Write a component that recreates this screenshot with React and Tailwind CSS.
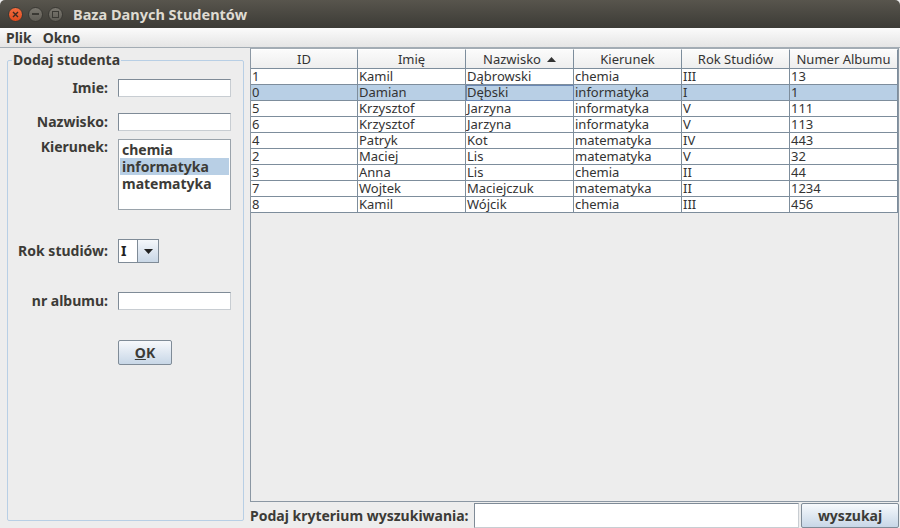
import React from "react";

const rows = [
  ["1", "Kamil", "Dąbrowski", "chemia", "III", "13"],
  ["0", "Damian", "Dębski", "informatyka", "I", "1"],
  ["5", "Krzysztof", "Jarzyna", "informatyka", "V", "111"],
  ["6", "Krzysztof", "Jarzyna", "informatyka", "V", "113"],
  ["4", "Patryk", "Kot", "matematyka", "IV", "443"],
  ["2", "Maciej", "Lis", "matematyka", "V", "32"],
  ["3", "Anna", "Lis", "chemia", "II", "44"],
  ["7", "Wojtek", "Maciejczuk", "matematyka", "II", "1234"],
  ["8", "Kamil", "Wójcik", "chemia", "III", "456"],
];

const headers = ["ID", "Imię", "Nazwisko", "Kierunek", "Rok Studiów", "Numer Albumu"];

const font = { fontFamily: '"Noto Sans", "DejaVu Sans", sans-serif' };

const TextField = ({ className = "" }) => (
  <div
    className={`h-[18px] w-[113px] bg-white border border-[#7f8b97] border-b-[#c8cdd2] border-r-[#c8cdd2] ${className}`}
  />
);

const App = () => {
  return (
    <div
      className="w-[900px] h-[528px] bg-[#ededed] flex flex-col overflow-hidden text-[#333333]"
      style={font}
    >
      {/* pasek tytułu */}
      <div className="h-[28px] bg-gradient-to-b from-[#58554d] to-[#3c3b36] flex items-center px-[8px] rounded-t-[5px]">
        <div className="flex items-center gap-[5px]">
          <div className="w-[15px] h-[15px] rounded-full bg-gradient-to-b from-[#f36d3f] to-[#df4a1c] border border-[#3a3934] flex items-center justify-center">
            <svg width="7" height="7" viewBox="0 0 7 7">
              <path d="M1 1 L6 6 M6 1 L1 6" stroke="#3c2a22" strokeWidth="1.4" />
            </svg>
          </div>
          <div className="w-[15px] h-[15px] rounded-full bg-gradient-to-b from-[#7a776f] to-[#5e5c55] border border-[#3a3934] flex items-center justify-center">
            <div className="w-[7px] h-[2px] bg-[#3a3934]" />
          </div>
          <div className="w-[15px] h-[15px] rounded-full bg-gradient-to-b from-[#7a776f] to-[#5e5c55] border border-[#3a3934] flex items-center justify-center">
            <div className="w-[7px] h-[7px] border border-[#3a3934]" />
          </div>
        </div>
        <span className="ml-[10px] text-[14.5px] font-bold text-[#dfdbd2] leading-none">
          Baza Danych Studentów
        </span>
      </div>

      {/* menu */}
      <div className="h-[20px] bg-gradient-to-b from-[#fbfbfb] to-[#e5e5e5] border-b border-[#a3acb4] flex items-center gap-[11px] px-[6px] text-[14px] font-bold text-[#3c3b37]">
        <span>Plik</span>
        <span>Okno</span>
      </div>

      <div className="flex-1 flex">
        {/* lewy panel */}
        <div className="w-[250px] shrink-0 pl-[7px] pr-[6px] pt-[4px] pb-[7px] flex">
          <fieldset className="flex-1 border border-[#b8cfe5] rounded-[2px] px-0 min-w-0">
            <legend className="ml-[4px] px-[1px] text-[14px] font-bold leading-[16px] text-[#3c3b37]">
              Dodaj studenta
            </legend>
            <div className="grid grid-cols-[100px_113px] gap-x-[10px] text-[14px] font-bold text-[#3c3b37] pt-[11px]">
              <div className="text-right leading-[18px]">Imie:</div>
              <TextField />

              <div className="text-right leading-[18px] mt-[16px]">Nazwisko:</div>
              <TextField className="mt-[16px]" />

              <div className="text-right leading-[18px] mt-[7px]">Kierunek:</div>
              <div className="mt-[8px] h-[71px] bg-white border border-[#9aa3ab] pt-[1px] px-[1px] font-bold text-[14px] leading-[17px]">
                <div className="px-[2px]">chemia</div>
                <div className="px-[2px] bg-[#b8cfe5]">informatyka</div>
                <div className="px-[2px]">matematyka</div>
              </div>

              <div className="text-right leading-[24px] mt-[29px]">Rok studiów:</div>
              <div className="mt-[29px] h-[24px] w-[41px] flex border border-[#7f8b97] bg-white">
                <div className="flex-1 bg-white font-bold text-[14px] leading-[22px] pl-[2px] border-r border-[#7f8b97] text-[#222]">
                  I
                </div>
                <div className="w-[20px] bg-gradient-to-b from-[#f4f7fb] to-[#c9d7e6] flex items-center justify-center">
                  <svg width="9" height="5" viewBox="0 0 9 5">
                    <path d="M0 0 L9 0 L4.5 5 Z" fill="#222" />
                  </svg>
                </div>
              </div>

              <div className="text-right leading-[18px] mt-[29px]">nr albumu:</div>
              <TextField className="mt-[29px]" />

              <div />
              <button className="mt-[30px] w-[54px] h-[25px] border border-[#7f8b97] rounded-[2px] bg-gradient-to-b from-[#f7f9fc] to-[#c8d7e7] text-[14px] font-bold text-[#3c3b37]">
                <span className="underline">O</span>K
              </button>
            </div>
          </fieldset>
        </div>

        {/* prawa część */}
        <div className="flex-1 flex flex-col pr-[1px]">
          <div className="flex-1 border border-[#8b97a3] border-t-[#a3acb4] bg-[#ededed] overflow-hidden">
            <div className="grid grid-cols-[107px_108px_108px_108px_108px_108px] text-[13px]">
              {headers.map((h, i) => (
                <div
                  key={h}
                  className="h-[20px] bg-gradient-to-b from-[#fbfbfb] to-[#eeeeee] border-b border-r border-[#7d8d9c] border-t border-t-[#ffffff] flex items-center justify-center font-normal text-[#333] leading-none"
                >
                  {h}
                  {i === 2 && (
                    <svg width="9" height="5" viewBox="0 0 9 5" className="ml-[6px]">
                      <path d="M0 5 L9 5 L4.5 0 Z" fill="#333" />
                    </svg>
                  )}
                </div>
              ))}
              {rows.map((r, ri) =>
                r.map((c, ci) => (
                  <div
                    key={ri + "-" + ci}
                    className={`h-[16px] border-b border-r border-[#7d8d9c] flex items-center leading-none pl-[1px] whitespace-nowrap ${
                      ri === 1 ? "bg-[#b8cfe5]" : "bg-white"
                    } ${ri === 1 && ci === 2 ? "outline outline-1 -outline-offset-1 outline-[#6a87b3]" : ""}`}
                  >
                    {c}
                  </div>
                ))
              )}
            </div>
          </div>
          <div className="h-[26px] flex items-stretch pt-[1px]">
            <div className="text-[14px] font-bold text-[#3c3b37] flex items-center pr-[5px]">
              Podaj kryterium wyszukiwania:
            </div>
            <div className="flex-1 bg-white border border-[#7f8b97] border-b-[#c8cdd2] border-r-[#c8cdd2]" />
            <button className="ml-[2px] w-[98px] border border-[#7f8b97] rounded-[2px] bg-gradient-to-b from-[#f7f9fc] to-[#c8d7e7] text-[14px] font-bold text-[#3c3b37]">
              wyszukaj
            </button>
          </div>
        </div>
      </div>
    </div>
  );
};

export default App;
